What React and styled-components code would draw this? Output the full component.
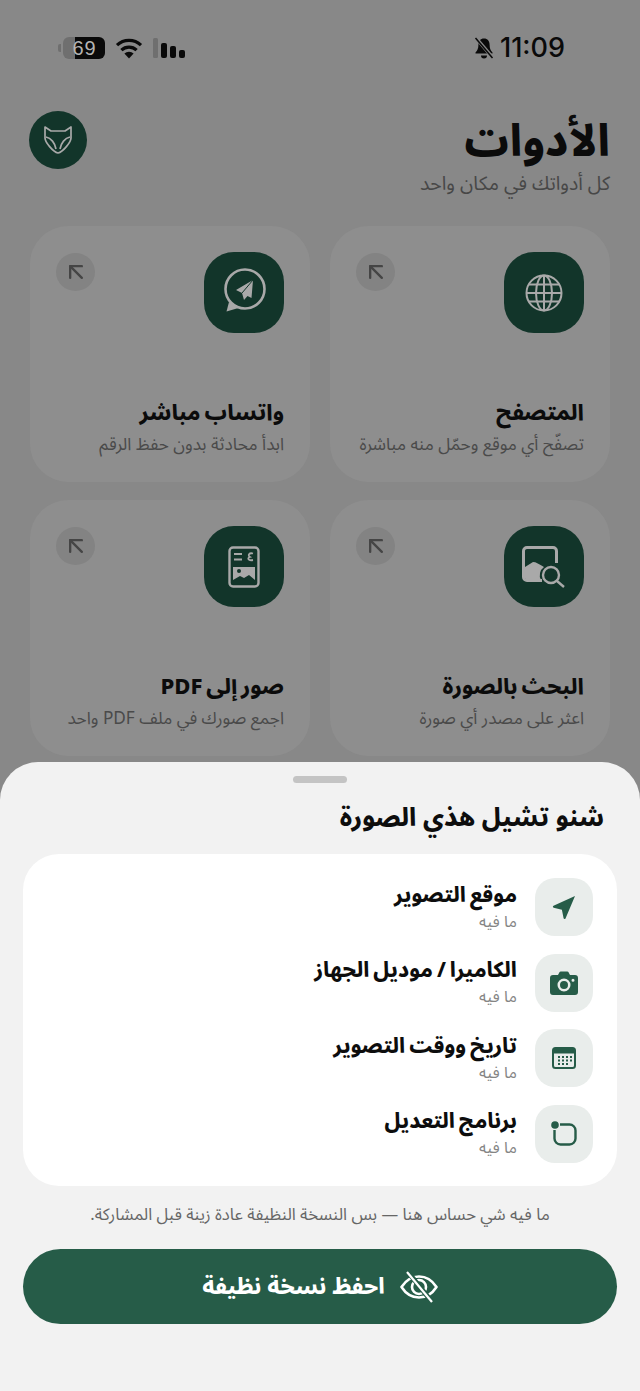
import React from 'react';
import styled, { createGlobalStyle } from 'styled-components';
import { ArrowUpLeft } from 'lucide-react';

const GlobalStyle = createGlobalStyle`
html, body { margin: 0; padding: 0; background: #888888; }
* { box-sizing: border-box; }
body { font-family: "Noto Sans Arabic", "Noto Sans", "DejaVu Sans", sans-serif; }
`;

const Screen = styled.div`
width: 640px;
height: 1391px;
overflow: hidden;
display: flex;
flex-direction: column;
background: #888888;
`;
const Dimmed = styled.div`
height: 762px;
flex: none;
display: flex;
flex-direction: column;
padding-top: 29px;
`;
const StatusBar = styled.div`
height: 36px;
display: flex;
direction: ltr;
align-items: center;
justify-content: space-between;
padding: 1px 75px 0 58px;
color: #0a0a0a;
`;
const StatusGroup = styled.div`
display: flex;
align-items: center;
gap: ${p => p.$gap || 10}px;
`;
const Battery = styled.div`
position: relative;
width: 42px;
height: 22px;
margin-left: 5px;
border-radius: 6px;
background: linear-gradient(90deg, #6f6f6f 0 12px, #0a0a0a 12px);
color: #b4b4b4;
font: 500 20px/22px "Liberation Sans", sans-serif;
letter-spacing: 1px;
text-align: center;
padding-left: 1px;
&::before {
  content: "";
  position: absolute;
  left: -5px;
  top: 7px;
  width: 3px;
  height: 8px;
  border-radius: 2px 0 0 2px;
  background: #6f6f6f;
}
`;
const Time = styled.span`
font: 500 27px/36px Inter, "Liberation Sans", sans-serif;
`;
const Header = styled.header`
direction: rtl;
margin-top: 46px;
padding: 0 30px 0 29px;
display: flex;
justify-content: space-between;
align-items: flex-start;
`;
const Title = styled.h1`
margin: 3px 0 0;
font-size: 44px;
line-height: 56px;
font-weight: 800;
color: #0b0b0b;
`;
const Sub = styled.p`
margin: 1px 0 0;
font-size: 19.4px;
line-height: 26px;
color: #474747;
`;
const Avatar = styled.div`
width: 58px;
height: 58px;
border-radius: 50%;
background: #12352a;
display: flex;
align-items: center;
justify-content: center;
`;
const Grid = styled.div`
direction: rtl;
margin: 29px 30px 0;
display: grid;
grid-template-columns: 280px 280px;
grid-auto-rows: 256px;
gap: 18px 20px;
`;
const Card = styled.div`
position: relative;
border-radius: 38px;
background: #8e8e8e;
padding: 26px 26px 24px;
display: flex;
flex-direction: column;
`;
const ToolIcon = styled.div`
width: 80px;
height: 81px;
border-radius: 30px;
background: #12352a;
display: flex;
align-items: center;
justify-content: center;
`;
const Corner = styled.div`
position: absolute;
top: 27px;
left: 26px;
width: 39px;
height: 38px;
border-radius: 50%;
background: #838383;
color: #454545;
display: flex;
align-items: center;
justify-content: center;
`;
const CardTitle = styled.h2`
margin: auto 0 0;
font-size: 22px;
line-height: 34px;
font-weight: 800;
word-spacing: -2px;
color: #0b0b0b;
`;
const CardSub = styled.p`
margin: 2px 0 0;
font-size: 17.2px;
line-height: 26px;
color: #4a4a4a;
white-space: nowrap;
`;
const Sheet = styled.section`
direction: rtl;
flex: 1;
background: #f2f2f2;
border-radius: 38px 38px 0 0;
padding: 14px 23px 0;
display: flex;
flex-direction: column;
`;
const Handle = styled.div`
align-self: center;
width: 54px;
height: 7px;
border-radius: 4px;
background: #c4c4c4;
`;
const SheetTitle = styled.h2`
margin: 16px 13px 0 0;
font-size: 25.2px;
line-height: 38px;
font-weight: 800;
color: #0d0d0d;
`;
const Panel = styled.div`
margin-top: 17px;
height: 332px;
border-radius: 36px;
background: #ffffff;
padding: 24px 24px 0;
display: flex;
flex-direction: column;
gap: 17.6px;
`;
const Row = styled.div`
display: flex;
align-items: center;
gap: 18px;
`;
const RowIcon = styled.div`
width: 58px;
height: 58px;
flex: none;
border-radius: 20px;
background: #e9edeb;
color: #265c48;
display: flex;
align-items: center;
justify-content: center;
`;
const RowText = styled.div`
padding-bottom: 2px;
`;
const RowTitle = styled.div`
font-size: 21px;
line-height: 30px;
font-weight: 800;
word-spacing: -1.5px;
color: #0d0d0d;
`;
const RowSub = styled.div`
margin-top: 1px;
font-size: 16px;
line-height: 22px;
color: #858585;
`;
const Note = styled.p`
margin: 16px 0 0;
text-align: center;
font-size: 16.7px;
line-height: 26px;
color: #666666;
white-space: nowrap;
`;
const SaveButton = styled.button`
margin-top: 21px;
height: 75px;
width: 100%;
border: 0;
border-radius: 38px;
background: #265c48;
color: #ffffff;
font: inherit;
font-size: 22.2px;
font-weight: 800;
display: flex;
align-items: center;
justify-content: center;
gap: 15px;
`;

const Wifi = () => (
  <svg width="28" height="22" viewBox="0 0 28 22">
    <path d="M14 21.5l-4.6-5a6.6 6.6 0 0 1 9.2 0z" fill="#0a0a0a" />
    <path d="M6.4 13.2a11 11 0 0 1 15.2 0M2 8.2a17.4 17.4 0 0 1 24 0" fill="none" stroke="#0a0a0a" strokeWidth="3.2" />
  </svg>
);
const Signal = () => (
  <svg width="32" height="22" viewBox="0 0 32 22">
    <rect x="0" y="1" width="5" height="20" rx="1.5" fill="#6f6f6f" />
    <rect x="8" y="6" width="6" height="15" rx="2" fill="#0a0a0a" />
    <rect x="17" y="9" width="6" height="12" rx="2" fill="#0a0a0a" />
    <rect x="26" y="13" width="6" height="8" rx="2" fill="#0a0a0a" />
  </svg>
);
const BellOff = () => (
  <svg width="20" height="22" viewBox="0 0 20 22">
    <path d="M10 1.5c-3.6 0-5.6 2.6-5.6 6.2 0 3.6-1 5.6-2.9 7.8v1h17v-1c-1.900-2.200-2.900-4.200-2.900-7.800C15.600 4.100 13.600 1.500 10 1.500z" fill="#0a0a0a" />
    <path d="M7 18.500a3 3 0 0 0 6 0z" fill="#0a0a0a" />
    <path d="M2 1l17 20" stroke="#888888" strokeWidth="3.400" />
    <path d="M1.500 1l17 20" stroke="#0a0a0a" strokeWidth="1.500" />
  </svg>
);
const Fox = () => (
  <svg width="28" height="28" viewBox="0 0 28 28" fill="none" stroke="#a9a9a9" strokeWidth="1.700" strokeLinejoin="round">
    <path d="M1 1l6 4h14l6-4v11c0 4-8 14-13 15C9 26 1 16 1 12z" />
    <path d="M2 11c5 1 9 6 10 12M26 11c-5 1-9 6-10 12" />
  </svg>
);
const Globe = () => (
  <svg width="40" height="40" viewBox="0 0 40 40" fill="none" stroke="#a9a9a9" strokeWidth="2">
    <circle cx="20" cy="20" r="17.500" />
    <ellipse cx="20" cy="20" rx="8" ry="17.500" />
    <path d="M20 2.500v35M2.500 20h35M5 11.500h30M5 28.500h30" />
  </svg>
);
const ChatPlane = () => (
  <svg width="46" height="54" viewBox="0 0 46 54" fill="none">
    <circle cx="24" cy="23" r="19.500" stroke="#a9a9a9" strokeWidth="2.600" />
    <path d="M8 36l-2.500 9.500L17.500 42" fill="#a9a9a9" />
    <path d="M32 14L15 24l6 3 2 7 3.500-4 4 2z" fill="#a9a9a9" />
    <path d="M21 27l11-13" stroke="#12352a" strokeWidth="1" />
  </svg>
);
const ImageSearch = () => (
  <svg width="44" height="42" viewBox="0 0 44 42" fill="none">
    <path d="M34.500 17V5A3.500 3.500 0 0 0 31 1.500H5A3.500 3.500 0 0 0 1.500 5v26A3.500 3.500 0 0 0 5 34.500h15" stroke="#a9a9a9" strokeWidth="3" />
    <path d="M3 21l8-5c3 0 6 2 11 5a10 10 0 0 0-3 13H5a2 2 0 0 1-2-2z" fill="#a9a9a9" />
    <circle cx="29" cy="29" r="8" stroke="#a9a9a9" strokeWidth="2.400" />
    <path d="M35 35l7 6" stroke="#a9a9a9" strokeWidth="2.400" />
  </svg>
);
const PdfDoc = () => (
  <svg width="32" height="42" viewBox="0 0 32 42" fill="none">
    <rect x="1.500" y="1.500" width="29" height="39" rx="3.500" stroke="#a9a9a9" strokeWidth="2.400" />
    <path d="M6 8h8M6 13.500h8M25 7.500c-4-1-5.500 2-3 3.500-3 1-2 4 3 3" stroke="#a9a9a9" strokeWidth="1.800" />
    <path d="M5 21h22v13l-6-5-5 3-4-2-7 4z" fill="#a9a9a9" />
    <circle cx="11" cy="25" r="2" fill="#12352a" />
  </svg>
);
const Navigate = () => (
  <svg width="26" height="26" viewBox="0 0 26 26">
    <path d="M24 2L14.500 24.500c-.4.900-1.700.8-1.900-.2l-1.700-8.600-8.200-2c-1-.2-1.100-1.500-.2-1.900z" fill="currentColor" />
  </svg>
);
const Camera = () => (
  <svg width="30" height="26" viewBox="0 0 30 26">
    <path fillRule="evenodd" d="M4 5h5l1.600-3c.2-.4.600-.6 1-.6h6.800c.4 0 .8.200 1 .6L21 5h5a3 3 0 0 1 3 3v14a3 3 0 0 1-3 3H4a3 3 0 0 1-3-3V8a3 3 0 0 1 3-3zm11 3.500a6.500 6.500 0 1 0 0 13 6.500 6.500 0 0 0 0-13zm0 2.500a4 4 0 1 1 0 8 4 4 0 0 1 0-8zm9-2.200a1.500 1.500 0 1 0 0 3 1.500 1.500 0 0 0 0-3z" fill="currentColor" />
  </svg>
);
const Calendar = () => (
  <svg width="24" height="22" viewBox="0 0 24 22">
    <rect x="1" y="1" width="22" height="20" rx="2.500" fill="none" stroke="currentColor" strokeWidth="2" />
    <rect x="1" y="1" width="22" height="5.500" fill="currentColor" />
    <g fill="currentColor">
      <rect x="6" y="9" width="2" height="2" /><rect x="10" y="9" width="2" height="2" /><rect x="14" y="9" width="2" height="2" /><rect x="18" y="9" width="2" height="2" />
      <rect x="6" y="12.500" width="2" height="2" /><rect x="10" y="12.500" width="2" height="2" /><rect x="14" y="12.500" width="2" height="2" /><rect x="18" y="12.500" width="2" height="2" />
      <rect x="6" y="16" width="2" height="2" /><rect x="10" y="16" width="2" height="2" /><rect x="14" y="16" width="2" height="2" />
    </g>
  </svg>
);
const EditBox = () => (
  <svg width="26" height="26" viewBox="0 0 26 26" fill="none">
    <path d="M9 3.500h9.500a6 6 0 0 1 6 6v8a6 6 0 0 1-6 6H9.500a6 6 0 0 1-6-6V9" stroke="currentColor" strokeWidth="2.400" />
    <circle cx="4" cy="4" r="3.800" fill="currentColor" />
  </svg>
);
const EyeOff = () => (
  <svg width="38" height="32" viewBox="0 0 38 32" fill="none" stroke="#ffffff">
    <path d="M1.500 16C6 9 12 5.500 19 5.500S32 9 36.500 16C32 23 26 26.500 19 26.500S6 23 1.500 16z" strokeWidth="2.600" strokeLinejoin="round" />
    <circle cx="19" cy="16" r="7" strokeWidth="2.600" />
    <path d="M8 1l24 30" stroke="#265c48" strokeWidth="5" />
    <path d="M7 1l25 30" strokeWidth="2.200" />
  </svg>
);

const tools = [
  { title: 'المتصفح', sub: 'تصفّح أي موقع وحمّل منه مباشرة', icon: <Globe /> },
  { title: 'واتساب مباشر', sub: 'ابدأ محادثة بدون حفظ الرقم', icon: <ChatPlane /> },
  { title: 'البحث بالصورة', sub: 'اعثر على مصدر أي صورة', icon: <ImageSearch /> },
  { title: 'صور إلى PDF', sub: 'اجمع صورك في ملف PDF واحد', icon: <PdfDoc /> },
];

const details = [
  { title: 'موقع التصوير', icon: <Navigate /> },
  { title: 'الكاميرا / موديل الجهاز', icon: <Camera /> },
  { title: 'تاريخ ووقت التصوير', icon: <Calendar /> },
  { title: 'برنامج التعديل', icon: <EditBox /> },
];

export default function App() {
  return (
    <Screen>
      <GlobalStyle />
      <Dimmed>
        <StatusBar>
          <StatusGroup>
            <Battery>69</Battery>
            <Wifi />
            <Signal />
          </StatusGroup>
          <StatusGroup $gap={6}>
            <BellOff />
            <Time>11:09</Time>
          </StatusGroup>
        </StatusBar>
        <Header>
          <div>
            <Title>الأدوات</Title>
            <Sub>كل أدواتك في مكان واحد</Sub>
          </div>
          <Avatar><Fox /></Avatar>
        </Header>
        <Grid>
          {tools.map(tool => (
            <Card key={tool.title}>
              <ToolIcon>{tool.icon}</ToolIcon>
              <Corner><ArrowUpLeft size={28} strokeWidth={2} /></Corner>
              <CardTitle>{tool.title}</CardTitle>
              <CardSub>{tool.sub}</CardSub>
            </Card>
          ))}
        </Grid>
      </Dimmed>
      <Sheet>
        <Handle />
        <SheetTitle>شنو تشيل هذي الصورة</SheetTitle>
        <Panel>
          {details.map(item => (
            <Row key={item.title}>
              <RowIcon>{item.icon}</RowIcon>
              <RowText>
                <RowTitle>{item.title}</RowTitle>
                <RowSub>ما فيه</RowSub>
              </RowText>
            </Row>
          ))}
        </Panel>
        <Note>ما فيه شي حساس هنا — بس النسخة النظيفة عادة زينة قبل المشاركة.</Note>
        <SaveButton>
          <EyeOff />
          احفظ نسخة نظيفة
        </SaveButton>
      </Sheet>
    </Screen>
  );
}
